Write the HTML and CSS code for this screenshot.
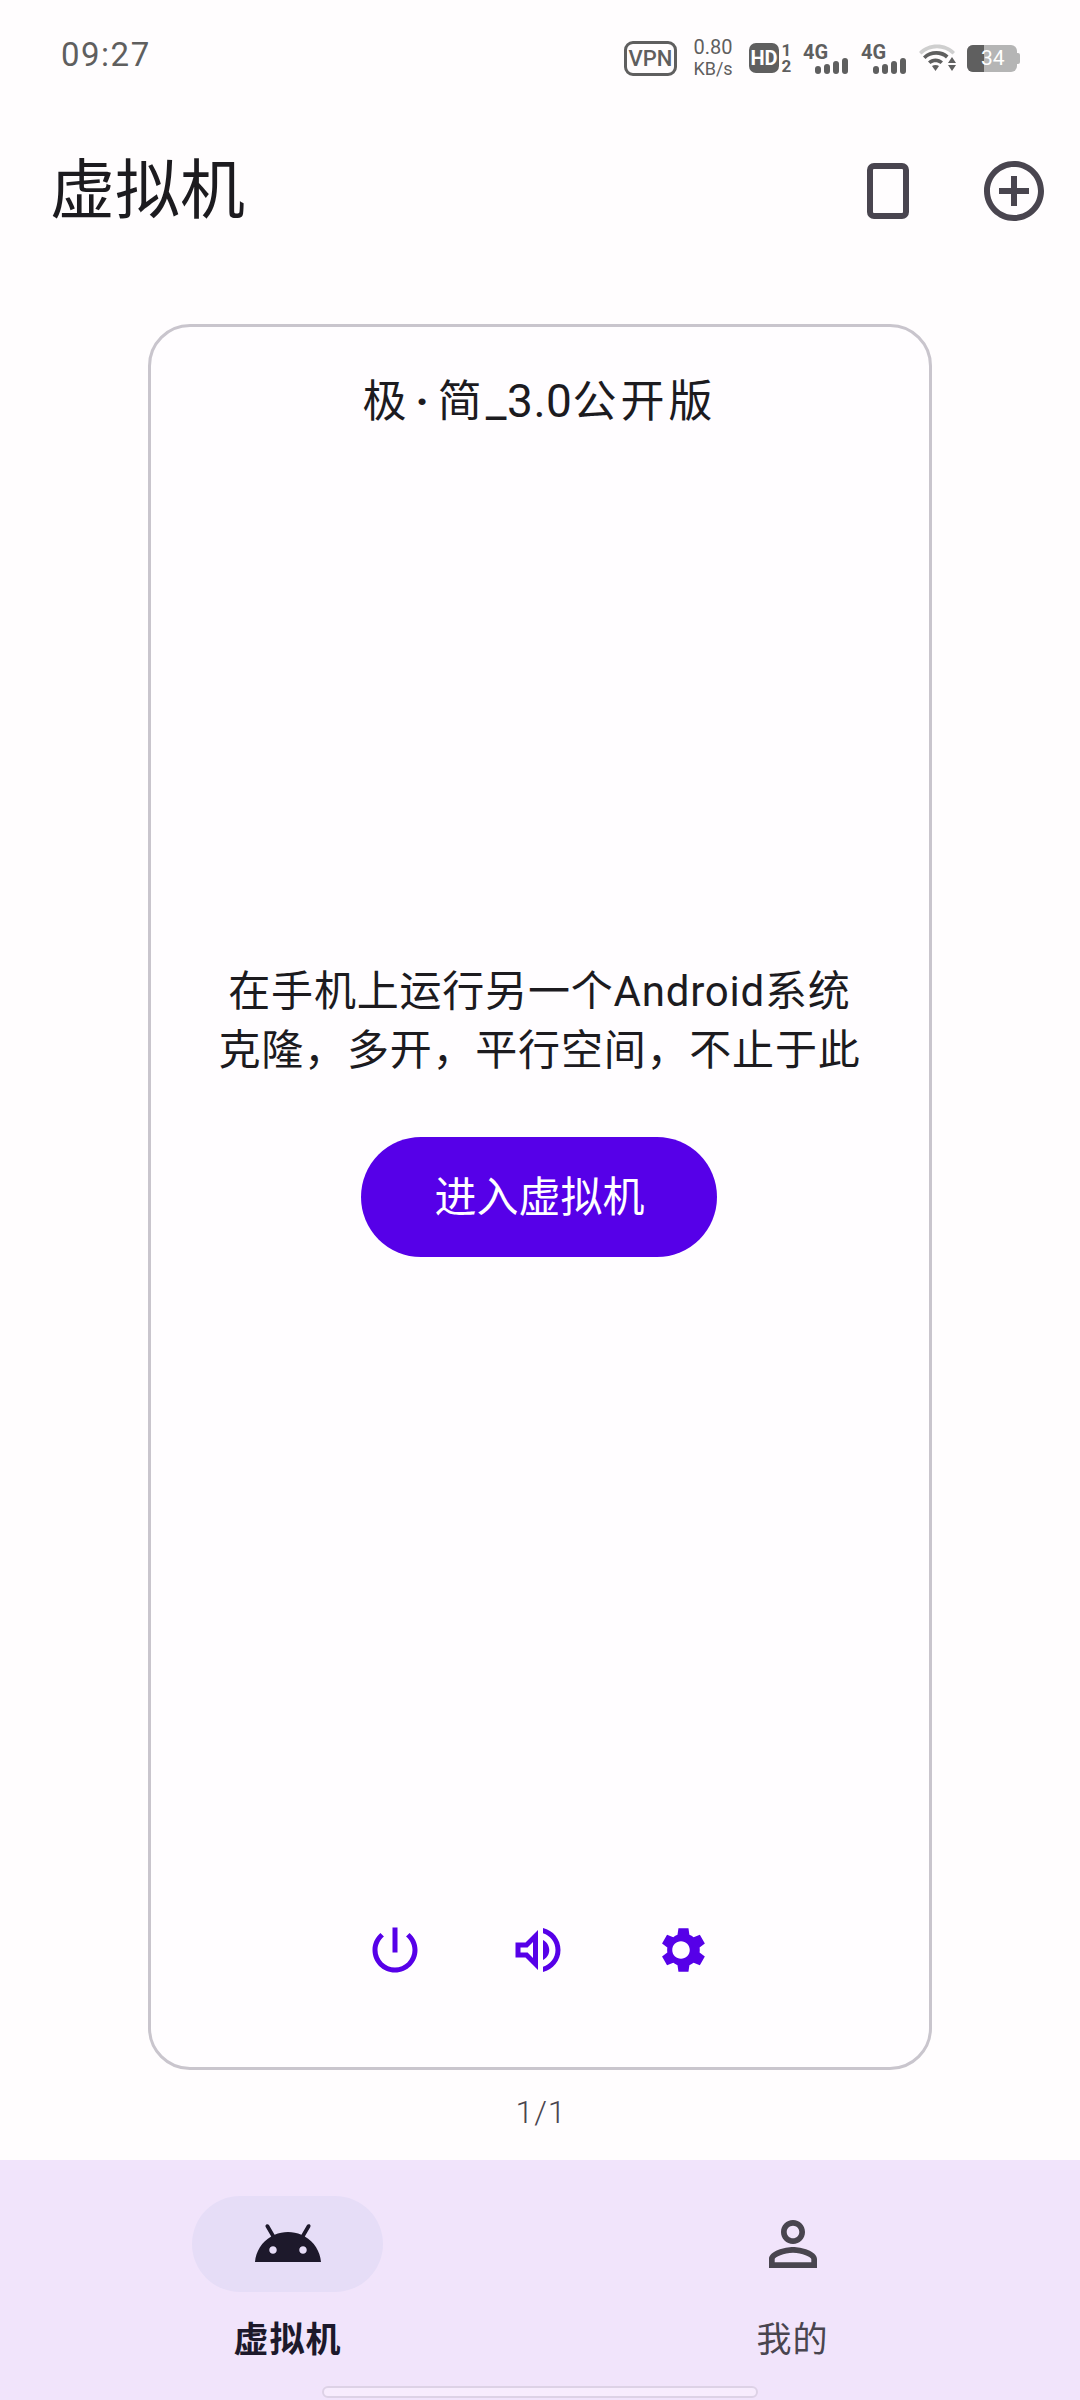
FILE: index.html
```html
<!DOCTYPE html>
<html lang="zh-CN">
<head>
<meta charset="UTF-8">
<meta name="viewport" content="width=device-width, initial-scale=1.0">
<title>虚拟机</title>
<link rel="stylesheet" href="styles.css">
</head>
<body>
<div class="status-bar">
  <span class="time">09:27</span>
  <div class="status-icons">
    <span class="vpn">VPN</span>
    <span class="speed"><span>0.80</span><span class="speed-unit">KB/s</span></span>
    <span class="hd"><span class="hd-box">HD</span><span class="hd-nums"><span>1</span><span>2</span></span></span>
    <span class="signal">
      <span class="signal-label">4G</span>
      <span class="bars"><i class="b1"></i><i class="b2"></i><i class="b3"></i><i class="b4"></i></span>
    </span>
    <span class="signal">
      <span class="signal-label">4G</span>
      <span class="bars"><i class="b1"></i><i class="b2"></i><i class="b3"></i><i class="b4"></i></span>
    </span>
    <svg class="wifi" viewBox="0 0 37 28">
      <path d="M0 8C9-2 27-2 36 8l-2.500 2.500C25 2 11 2 2.500 10.500z" fill="#cfcfcf"/>
      <path d="M4 12.500C11 5.500 23 5.500 29.500 11.500l-2.500 3C21.500 9.500 12 9.500 6.500 15z" fill="#5f5f5f"/>
      <path d="M9 17.500c4-4 11-4 15 0l-2.500 2.500c-3-2.500-7-2.500-10 0z" fill="#5f5f5f"/>
      <path d="M13 22c2-1.500 5-1.500 7 0l-3.500 5z" fill="#5f5f5f"/>
      <path d="M33 13l4 6h-8zM33 27l-4-6h8z" fill="#5f5f5f"/>
    </svg>
    <span class="battery"><span class="battery-level"></span><span class="battery-text">34</span><span class="battery-tip"></span></span>
  </div>
</div>

<header class="app-bar">
  <h1 class="app-title">虚拟机</h1>
  <div class="app-actions">
    <svg class="phone-icon" viewBox="0 0 42 56"><rect x="3" y="3" width="36" height="50" rx="4" fill="none" stroke="#49454f" stroke-width="6"/></svg>
    <svg class="add-icon" viewBox="0 0 24 24"><path fill="#49454f" d="M13 7h-2v4H7v2h4v4h2v-4h4v-2h-4V7zm-1-5C6.480 2 2 6.480 2 12s4.480 10 10 10 10-4.480 10-10S17.520 2 12 2zm0 18c-4.410 0-8-3.590-8-8s3.590-8 8-8 8 3.590 8 8-3.590 8-8 8z"/></svg>
  </div>
</header>

<main class="pager">
  <section class="vm-card">
    <h2 class="vm-name">极<span class="name-dot">·</span>简<span class="name-version">_3.0</span>公开版</h2>
    <div class="vm-intro">
      <p>在手机上运行另一个Android系统<br>克隆，多开，平行空间，不止于此</p>
      <button class="enter-btn">进入虚拟机</button>
    </div>
    <div class="vm-controls">
      <svg viewBox="0 0 24 24"><path d="M13 3h-2v10h2V3zm4.830 2.170l-1.420 1.420C17.990 7.860 19 9.810 19 12c0 3.870-3.130 7-7 7s-7-3.130-7-7c0-2.190 1.010-4.140 2.580-5.420L6.170 5.170C4.230 6.820 3 9.260 3 12c0 4.970 4.030 9 9 9s9-4.030 9-9c0-2.740-1.230-5.180-3.170-6.830z"/></svg>
      <svg viewBox="0 0 24 24"><path d="M3 9v6h4l5 5V4L7 9H3zm7-.170v6.340L7.830 13H5v-2h2.830L10 8.830zM16.500 12c0-1.770-1.020-3.290-2.500-4.030v8.050c1.480-.73 2.500-2.250 2.500-4.020zM14 3.230v2.060c2.890.86 5 3.540 5 6.710s-2.110 5.850-5 6.710v2.060c4.010-.91 7-4.490 7-8.770 0-4.280-2.990-7.860-7-8.770z"/></svg>
      <svg viewBox="0 0 24 24"><path fill-rule="evenodd" d="M19.430 12.980c.04-.32.07-.64.07-.98s-.03-.66-.07-.98l2.110-1.650-2-3.460-2.490 1c-.52-.4-1.080-.73-1.690-.98l-.38-2.650h-4l-.38 2.650c-.61.25-1.170.59-1.690.98l-2.490-1-2 3.460 2.110 1.650c-.04.32-.07.65-.07.98s.03.66.07.98l-2.110 1.650 2 3.460 2.490-1c.52.4 1.080.73 1.690.98l.38 2.650h4l.38-2.650c.61-.25 1.170-.59 1.690-.98l2.490 1 2-3.460-2.110-1.650zM12 15.500c-1.930 0-3.500-1.570-3.500-3.500s1.570-3.500 3.500-3.500 3.500 1.570 3.500 3.500-1.570 3.500-3.500 3.500z"/></svg>
    </div>
  </section>
  <div class="page-count">1/1</div>
</main>

<nav class="bottom-nav">
  <div class="nav-item active">
    <div class="nav-pill">
      <svg viewBox="0 0 24 24"><path fill="#1d192b" fill-rule="evenodd" d="M17.600 9.480l1.840-3.180c.16-.31.04-.69-.26-.85-.29-.15-.65-.06-.83.22l-1.880 3.240c-2.860-1.210-6.080-1.210-8.940 0L5.650 5.670c-.19-.29-.58-.38-.87-.2-.28.18-.37.54-.22.83L6.400 9.480C3.300 11.250 1.280 14.440 1 18h22c-.28-3.560-2.300-6.750-5.400-8.520zM7 15.250c-.69 0-1.250-.56-1.250-1.250s.56-1.250 1.250-1.250 1.250.56 1.250 1.250-.56 1.250-1.250 1.250zm10 0c-.69 0-1.250-.56-1.250-1.250s.56-1.250 1.250-1.250 1.250.56 1.250 1.250-.56 1.250-1.250 1.250z"/></svg>
    </div>
    <span class="nav-label">虚拟机</span>
  </div>
  <div class="nav-item">
    <div class="nav-pill">
      <svg viewBox="0 0 24 24"><path fill="#49454f" d="M12 5.900c1.160 0 2.100.94 2.100 2.100s-.94 2.100-2.100 2.100S9.900 9.160 9.900 8s.94-2.100 2.100-2.100m0 9c2.970 0 6.100 1.460 6.100 2.100v1.100H5.900V17c0-.64 3.130-2.100 6.100-2.100M12 4C9.790 4 8 5.790 8 8s1.790 4 4 4 4-1.790 4-4-1.790-4-4-4zm0 9c-2.670 0-8 1.340-8 4v3h16v-3c0-2.660-5.330-4-8-4z"/></svg>
    </div>
    <span class="nav-label">我的</span>
  </div>
  <div class="home-bar"></div>
</nav>
</body>
</html>
```

FILE: styles.css
```css
* {
  box-sizing: border-box;
}

body {
  margin: 0;
  width: 1080px;
  height: 2400px;
  display: flex;
  flex-direction: column;
  overflow: hidden;
  background: #fffdfe;
  color: #1c1b1f;
  font-family: Roboto, "Noto Sans CJK SC", sans-serif;
}

/* status bar */
.status-bar {
  height: 108px;
  display: flex;
  justify-content: space-between;
  align-items: flex-start;
  padding: 0 63px 0 61px;
  color: #5f5f5f;
}

.time {
  margin-top: 35px;
  font-size: 33px;
  line-height: 40px;
  letter-spacing: 1.5px;
}

.status-icons {
  display: flex;
  align-items: center;
  height: 36px;
  margin-top: 40px;
}

.vpn {
  width: 53px;
  height: 35px;
  border: 3px solid #5f5f5f;
  border-radius: 9px;
  font-size: 22px;
  font-weight: 500;
  line-height: 29px;
  text-align: center;
}

.speed {
  display: flex;
  flex-direction: column;
  align-items: center;
  width: 42px;
  margin-left: 15px;
  font-size: 20px;
  line-height: 21px;
}

.speed-unit {
  font-size: 18px;
}

.hd {
  display: flex;
  align-items: center;
  margin-left: 15px;
}

.hd-box {
  width: 30px;
  height: 30px;
  border-radius: 7px;
  background: #5f5f5f;
  color: #fff;
  font-size: 20px;
  font-weight: 700;
  line-height: 30px;
  text-align: center;
}

.hd-nums {
  display: flex;
  flex-direction: column;
  align-items: center;
  width: 15px;
  font-size: 17px;
  font-weight: 700;
  line-height: 16px;
}

.signal {
  display: flex;
  flex-direction: column;
  width: 45px;
  height: 32px;
  margin-left: 9px;
}

.signal + .signal {
  margin-left: 13px;
}

.signal-label {
  font-size: 20px;
  font-weight: 700;
  line-height: 20px;
}

.bars {
  display: flex;
  align-items: flex-end;
  justify-content: flex-end;
  gap: 3px;
  height: 16px;
  margin-top: -4px;
}

.bars i {
  width: 6px;
  border-radius: 3px;
  background: #5f5f5f;
}

.bars .b1 { height: 8px; }
.bars .b2 { height: 10px; }
.bars .b3 { height: 13px; }
.bars .b4 { height: 16px; }

.wifi {
  width: 37px;
  height: 28px;
  margin-left: 13px;
}

.battery {
  position: relative;
  width: 50px;
  height: 27px;
  margin-left: 11px;
  border-radius: 6px;
  background: #b5b5b5;
  overflow: visible;
}

.battery-level {
  position: absolute;
  left: 0;
  top: 0;
  bottom: 0;
  width: 17px;
  border-radius: 6px 0 0 6px;
  background: #5f5f5f;
}

.battery-text {
  position: absolute;
  left: 14px;
  top: 0;
  color: #fff;
  font-size: 21px;
  line-height: 27px;
}

.battery-tip {
  position: absolute;
  right: -3px;
  top: 8px;
  width: 3px;
  height: 11px;
  border-radius: 0 2px 2px 0;
  background: #b5b5b5;
}

/* app bar */
.app-bar {
  height: 164px;
  display: flex;
  justify-content: space-between;
  align-items: center;
  padding: 2px 30px 0 50px;
}

.app-title {
  margin: 0;
  font-size: 65px;
  font-weight: 400;
  line-height: 80px;
}

.app-actions {
  display: flex;
  align-items: center;
  gap: 69px;
}

.phone-icon {
  width: 42px;
  height: 56px;
}

.add-icon {
  width: 72px;
  height: 72px;
}

/* card */
.pager {
  flex: 1;
  display: flex;
  flex-direction: column;
  align-items: center;
  padding-top: 52px;
}

.vm-card {
  width: 784px;
  height: 1746px;
  margin-left: -1px;
  display: flex;
  flex-direction: column;
  align-items: center;
  border: 3px solid #c9c5cd;
  border-radius: 42px;
  background: #fffdff;
}

.vm-name {
  margin: 49px 0 0;
  font-size: 44px;
  font-weight: 400;
  line-height: 50px;
  letter-spacing: 4px;
}

.name-dot {
  margin: 0 5px;
  font-weight: 700;
}

.name-version {
  font-size: 46px;
  letter-spacing: .5px;
}

.vm-intro {
  margin-top: 535px;
  display: flex;
  flex-direction: column;
  align-items: center;
}

.vm-intro p {
  margin: 0;
  font-size: 42px;
  line-height: 59px;
  letter-spacing: .8px;
  text-align: center;
}

.enter-btn {
  width: 356px;
  height: 120px;
  margin-top: 57px;
  padding: 0 0 8px;
  border: none;
  border-radius: 60px;
  background: #5600e8;
  color: #fff;
  font-family: inherit;
  font-size: 42px;
}

.vm-controls {
  margin-top: auto;
  margin-bottom: 87px;
  margin-right: 4px;
  display: flex;
  gap: 83px;
}

.vm-controls svg {
  width: 60px;
  height: 60px;
  fill: #5600e8;
}

.page-count {
  margin-top: 22px;
  margin-left: 2px;
  color: #49454f;
  font-size: 32px;
  font-weight: 300;
  line-height: 40px;
  letter-spacing: 1px;
}

/* bottom nav */
.bottom-nav {
  position: relative;
  height: 240px;
  display: flex;
  padding: 36px 35px 0;
  background: #f1e4fb;
}

.nav-item {
  flex: 1;
  display: flex;
  flex-direction: column;
  align-items: center;
}

.nav-pill {
  width: 191px;
  height: 96px;
  display: flex;
  justify-content: center;
  align-items: center;
  border-radius: 48px;
}

.nav-pill svg {
  width: 72px;
  height: 72px;
}

.active .nav-pill {
  background: #e6ddf7;
}

.nav-label {
  margin-top: 24px;
  color: #49454f;
  font-size: 35px;
  line-height: 50px;
  letter-spacing: 1px;
}

.active .nav-label {
  color: #1d192b;
  font-weight: 700;
}

.home-bar {
  position: absolute;
  left: 322px;
  bottom: 2px;
  width: 436px;
  height: 12px;
  border: 2px solid #ddd2e6;
  border-radius: 6px;
  background: #f7ecfd;
}
```
